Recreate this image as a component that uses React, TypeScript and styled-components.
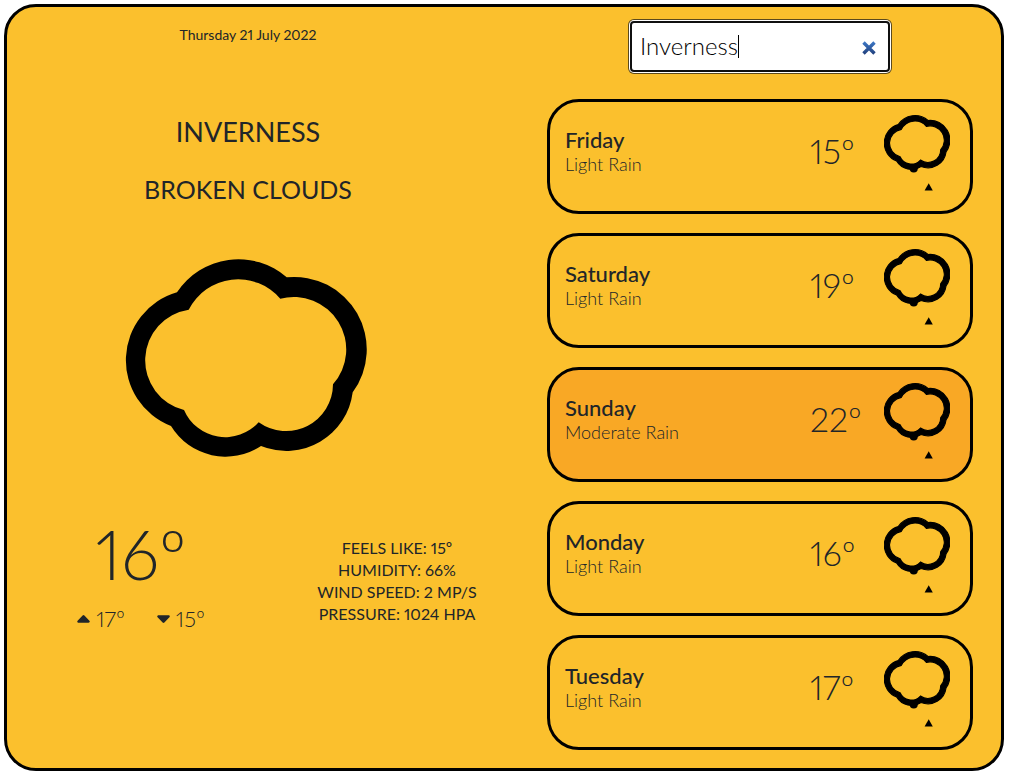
import React, { useState } from "react";
import styled, { createGlobalStyle } from "styled-components";

const GlobalStyle = createGlobalStyle`
  *, *::before, *::after { box-sizing: border-box; }
  body {
    margin: 0;
    background: #fff;
    color: #212529;
    font-family: Lato, "Open Sans", sans-serif;
    font-variant-numeric: proportional-nums;
  }
  h1, h2, h3, p, ul { margin: 0; padding: 0; }
`;

const Frame = styled.main`
  display: grid;
  grid-template-columns: 482px minmax(0, 1fr);
  min-height: calc(100vh - 9px);
  margin: 4px 10px 5px 4px;
  border: 3px solid #000;
  border-radius: 32px;
  background: #fbc02d;
`;

const Current = styled.section`
  display: flex;
  flex-direction: column;
  align-items: center;
  padding-top: 18px;
`;

const DateLine = styled.p`
  font-size: 14px;
  line-height: 20px;
`;

const City = styled.h1`
  margin-top: 70px;
  font-size: 27px;
  line-height: 34px;
  font-weight: 400;
  text-transform: uppercase;
`;

const Condition = styled.h2`
  margin-top: 23px;
  font-size: 25px;
  line-height: 34px;
  font-weight: 400;
  text-transform: uppercase;
`;

const BigCloud = styled.svg`
  display: block;
  width: 246px;
  height: 198px;
  margin-top: 53px;
`;

const Readings = styled.div`
  display: grid;
  grid-template-columns: 268px minmax(0, 1fr);
  align-items: center;
  align-self: stretch;
  margin-top: 62px;
`;

const Temperatures = styled.div`
  display: flex;
  flex-direction: column;
  align-items: center;
`;

const Now = styled.p`
  font-size: 68px;
  line-height: 70px;
  font-weight: 300;
`;

const Range = styled.div`
  display: flex;
  gap: 32px;
  margin-top: 16px;
`;

const Bound = styled.p`
  display: flex;
  align-items: center;
  gap: 6px;
  font-size: 22px;
  line-height: 28px;
  font-weight: 300;
`;

const Details = styled.ul`
  list-style: none;
  padding: 9px 0 0 30px;
  text-align: center;
  text-transform: uppercase;
  white-space: nowrap;
  font-size: 16px;
  line-height: 22px;
`;

const Side = styled.section`
  display: flex;
  flex-direction: column;
  padding: 14px 28px 18px 58px;
`;

const SearchBox = styled.form`
  position: relative;
  display: flex;
  align-items: center;
  align-self: center;
  width: 260px;
  height: 51px;
  border: 2px solid #101010;
  border-radius: 4px;
  background: #fff;
  box-shadow: 0 0 0 1px #fff, 0 0 0 2px #5c4a1c;
`;

const SearchInput = styled.input`
  flex: 1;
  min-width: 0;
  height: 100%;
  padding: 0 0 3px 8px;
  border: 0;
  outline: 0;
  background: transparent;
  color: #000;
  caret-color: transparent;
  font: 300 24px Lato, "Open Sans", sans-serif;
`;

const Caret = styled.span`
  position: absolute;
  left: 106px;
  top: 12px;
  width: 1px;
  height: 23px;
  background: #000;
`;

const ClearButton = styled.button`
  display: flex;
  padding: 0;
  margin: 3px 12px 0 0;
  border: 0;
  background: none;
  cursor: pointer;
`;

const Forecast = styled.ul`
  display: flex;
  flex-direction: column;
  gap: 19px;
  margin-top: 27px;
  list-style: none;
`;

const Card = styled.li<{ $warm?: boolean }>`
  display: grid;
  grid-template-columns: minmax(0, 1fr) 74px 66px;
  height: 115px;
  padding: 13px 20px 0 15px;
  border: 3px solid #000;
  border-radius: 32px;
  background: ${(p) => (p.$warm ? "#f9a825" : "transparent")};
`;

const DayText = styled.div`
  padding-top: 12px;
`;

const Day = styled.h3`
  font-size: 22px;
  line-height: 26px;
  font-weight: 500;
`;

const Summary = styled.p`
  font-size: 18px;
  line-height: 22px;
  font-weight: 300;
`;

const DayTemp = styled.p`
  padding-top: 14px;
  font-size: 34px;
  line-height: 44px;
  font-weight: 300;
`;

const SmallCloud = styled.svg`
  display: block;
  width: 66px;
  height: 76px;
`;

const CLOUD =
  "M52 33.3A73.5 73.5 0 0 1 161.7 18.3A72.5 72.5 0 0 1 227.7 133.3A67 67 0 0 1 136 187A64 64 0 0 1 46 167A70.6 70.6 0 0 1 52 33.3Z" +
  "M63.7 50.7A55.5 55.5 0 0 1 155.3 39.7A52.5 52.5 0 0 1 208 125.3A47 47 0 0 1 133.7 163.3A45 45 0 0 1 59 151A51.2 51.2 0 0 1 63.7 50.7Z";

const forecast = [
  { day: "Friday", summary: "Light Rain", temp: 15 },
  { day: "Saturday", summary: "Light Rain", temp: 19 },
  { day: "Sunday", summary: "Moderate Rain", temp: 22 },
  { day: "Monday", summary: "Light Rain", temp: 16 },
  { day: "Tuesday", summary: "Light Rain", temp: 17 },
];

const details = ["Feels like: 15º", "Humidity: 66%", "Wind speed: 2 mp/s", "Pressure: 1024 hPa"];

const UpIcon = () => (
  <svg width="13" height="8" viewBox="0 0 13 8" aria-hidden="true">
    <path d="M5.6.5a1.3 1.3 0 0 1 1.8 0l5 5.2c.8.8.3 2.1-.9 2.1h-10C.4 7.8-.2 6.5.6 5.7Z" fill="#212529" />
  </svg>
);

const DownIcon = () => (
  <svg width="13" height="8" viewBox="0 0 13 8" aria-hidden="true">
    <path d="M5.6 7.5a1.3 1.3 0 0 0 1.8 0l5-5.2c.8-.8.3-2.1-.9-2.1h-10C.4.2-.2 1.5.6 2.3Z" fill="#212529" />
  </svg>
);

export default function App() {
  const [query, setQuery] = useState("Inverness");
  return (
    <>
      <GlobalStyle />
      <Frame>
        <Current>
          <DateLine>Thursday 21 July 2022</DateLine>
          <City>Inverness</City>
          <Condition>Broken clouds</Condition>
          <BigCloud viewBox="0 0 246 198" role="img" aria-label="Broken clouds">
            <path d={CLOUD} fillRule="evenodd" />
          </BigCloud>
          <Readings>
            <Temperatures>
              <Now>16º</Now>
              <Range>
                <Bound><UpIcon />17º</Bound>
                <Bound><DownIcon />15º</Bound>
              </Range>
            </Temperatures>
            <Details>
              {details.map((d) => <li key={d}>{d}</li>)}
            </Details>
          </Readings>
        </Current>
        <Side>
          <SearchBox onSubmit={(e) => e.preventDefault()}>
            <SearchInput
              aria-label="City"
              value={query}
              onChange={(e) => setQuery(e.target.value)}
            />
            <Caret />
            <ClearButton type="button" aria-label="Clear" onClick={() => setQuery("")}>
              <svg width="14" height="14" viewBox="0 0 14 14">
                <defs>
                  <linearGradient id="clear" x1="0" y1="0" x2="0" y2="14" gradientUnits="userSpaceOnUse">
                    <stop offset="0" stopColor="#3f7ccb" />
                    <stop offset="1" stopColor="#1f3c78" />
                  </linearGradient>
                </defs>
                <path d="M1.5 1.5L12.5 12.5M12.5 1.5L1.5 12.5" stroke="url(#clear)" strokeWidth="3.4" />
              </svg>
            </ClearButton>
          </SearchBox>
          <Forecast>
            {forecast.map((f) => (
              <Card key={f.day} $warm={f.temp > 20}>
                <DayText>
                  <Day>{f.day}</Day>
                  <Summary>{f.summary}</Summary>
                </DayText>
                <DayTemp>{f.temp}º</DayTemp>
                <SmallCloud viewBox="0 -2 242 279" role="img" aria-label={f.summary}>
                  <path d={CLOUD} fillRule="evenodd" stroke="#000" strokeWidth="4" />
                  <circle cx="109" cy="194" r="15" />
                  <path d="M164 249L179 275H149Z" />
                </SmallCloud>
              </Card>
            ))}
          </Forecast>
        </Side>
      </Frame>
    </>
  );
}
